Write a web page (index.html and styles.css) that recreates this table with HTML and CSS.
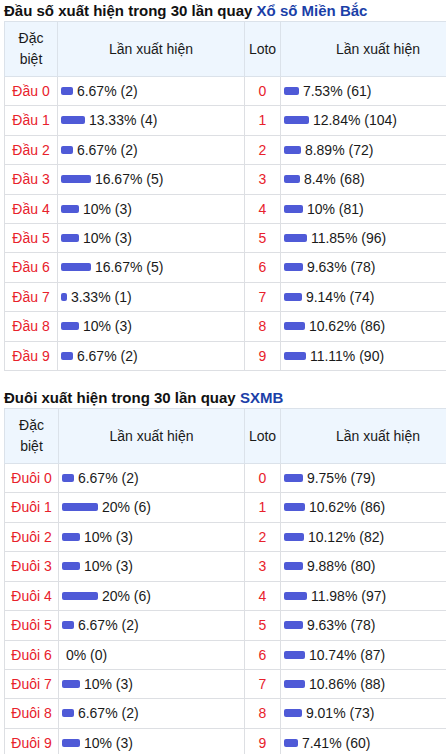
FILE: index.html
```html
<!DOCTYPE html>
<html lang="vi">
<head>
  <meta charset="UTF-8">
  <meta name="viewport" content="width=device-width, initial-scale=1.0">
  <title>Thống kê đầu đuôi</title>
  <link rel="stylesheet" href="styles.css">
</head>
<body>
  <div class="page">
    <section class="stat">
      <h2 class="stat-title">Đầu số xuất hiện trong 30 lần quay <a href="#">Xổ số Miền Bắc</a></h2>
      <table class="stat-table">
        <colgroup>
          <col class="c-head">
          <col class="c-count">
          <col class="c-loto">
          <col class="c-count2">
        </colgroup>
        <tr>
          <th>Đặc biệt</th>
          <th>Lần xuất hiện</th>
          <th>Loto</th>
          <th>Lần xuất hiện</th>
        </tr>
        <tr><td class="lbl">Đầu 0</td><td><span class="bar" style="width:12px"></span> 6.67% (2)</td><td class="lbl">0</td><td><span class="bar" style="width:15px"></span> 7.53% (61)</td></tr>
        <tr><td class="lbl">Đầu 1</td><td><span class="bar" style="width:24px"></span> 13.33% (4)</td><td class="lbl">1</td><td><span class="bar" style="width:25px"></span> 12.84% (104)</td></tr>
        <tr><td class="lbl">Đầu 2</td><td><span class="bar" style="width:12px"></span> 6.67% (2)</td><td class="lbl">2</td><td><span class="bar" style="width:17px"></span> 8.89% (72)</td></tr>
        <tr><td class="lbl">Đầu 3</td><td><span class="bar" style="width:30px"></span> 16.67% (5)</td><td class="lbl">3</td><td><span class="bar" style="width:16px"></span> 8.4% (68)</td></tr>
        <tr><td class="lbl">Đầu 4</td><td><span class="bar" style="width:18px"></span> 10% (3)</td><td class="lbl">4</td><td><span class="bar" style="width:19px"></span> 10% (81)</td></tr>
        <tr><td class="lbl">Đầu 5</td><td><span class="bar" style="width:18px"></span> 10% (3)</td><td class="lbl">5</td><td><span class="bar" style="width:23px"></span> 11.85% (96)</td></tr>
        <tr><td class="lbl">Đầu 6</td><td><span class="bar" style="width:30px"></span> 16.67% (5)</td><td class="lbl">6</td><td><span class="bar" style="width:19px"></span> 9.63% (78)</td></tr>
        <tr><td class="lbl">Đầu 7</td><td><span class="bar" style="width:6px"></span> 3.33% (1)</td><td class="lbl">7</td><td><span class="bar" style="width:18px"></span> 9.14% (74)</td></tr>
        <tr><td class="lbl">Đầu 8</td><td><span class="bar" style="width:18px"></span> 10% (3)</td><td class="lbl">8</td><td><span class="bar" style="width:21px"></span> 10.62% (86)</td></tr>
        <tr><td class="lbl">Đầu 9</td><td><span class="bar" style="width:12px"></span> 6.67% (2)</td><td class="lbl">9</td><td><span class="bar" style="width:22px"></span> 11.11% (90)</td></tr>
      </table>
    </section>

    <section class="stat">
      <h2 class="stat-title">Đuôi xuất hiện trong 30 lần quay <a href="#">SXMB</a></h2>
      <table class="stat-table stat-table--tail">
        <colgroup>
          <col class="c-head">
          <col class="c-count">
          <col class="c-loto">
          <col class="c-count2">
        </colgroup>
        <tr>
          <th>Đặc biệt</th>
          <th>Lần xuất hiện</th>
          <th>Loto</th>
          <th>Lần xuất hiện</th>
        </tr>
        <tr><td class="lbl">Đuôi 0</td><td><span class="bar" style="width:12px"></span> 6.67% (2)</td><td class="lbl">0</td><td><span class="bar" style="width:19px"></span> 9.75% (79)</td></tr>
        <tr><td class="lbl">Đuôi 1</td><td><span class="bar" style="width:36px"></span> 20% (6)</td><td class="lbl">1</td><td><span class="bar" style="width:21px"></span> 10.62% (86)</td></tr>
        <tr><td class="lbl">Đuôi 2</td><td><span class="bar" style="width:18px"></span> 10% (3)</td><td class="lbl">2</td><td><span class="bar" style="width:20px"></span> 10.12% (82)</td></tr>
        <tr><td class="lbl">Đuôi 3</td><td><span class="bar" style="width:18px"></span> 10% (3)</td><td class="lbl">3</td><td><span class="bar" style="width:19px"></span> 9.88% (80)</td></tr>
        <tr><td class="lbl">Đuôi 4</td><td><span class="bar" style="width:36px"></span> 20% (6)</td><td class="lbl">4</td><td><span class="bar" style="width:23px"></span> 11.98% (97)</td></tr>
        <tr><td class="lbl">Đuôi 5</td><td><span class="bar" style="width:12px"></span> 6.67% (2)</td><td class="lbl">5</td><td><span class="bar" style="width:19px"></span> 9.63% (78)</td></tr>
        <tr><td class="lbl">Đuôi 6</td><td><span class="bar" style="width:0px"></span> 0% (0)</td><td class="lbl">6</td><td><span class="bar" style="width:21px"></span> 10.74% (87)</td></tr>
        <tr><td class="lbl">Đuôi 7</td><td><span class="bar" style="width:18px"></span> 10% (3)</td><td class="lbl">7</td><td><span class="bar" style="width:21px"></span> 10.86% (88)</td></tr>
        <tr><td class="lbl">Đuôi 8</td><td><span class="bar" style="width:12px"></span> 6.67% (2)</td><td class="lbl">8</td><td><span class="bar" style="width:18px"></span> 9.01% (73)</td></tr>
        <tr><td class="lbl">Đuôi 9</td><td><span class="bar" style="width:18px"></span> 10% (3)</td><td class="lbl">9</td><td><span class="bar" style="width:14px"></span> 7.41% (60)</td></tr>
      </table>
    </section>
  </div>
</body>
</html>
```

FILE: styles.css
```css
html, body {
  overflow: hidden;
}
body {
  margin: 0;
  background: #fff;
  color: #1a1a1a;
  font-family: 'Liberation Sans', Arial, sans-serif;
  font-size: 14px;
}
.page {
  padding: 0 4px;
}
.stat + .stat {
  margin-top: 16px;
}
.stat-title {
  margin: 0;
  font-size: 15px;
  line-height: 21px;
  font-weight: bold;
  color: #111;
  white-space: nowrap;
}
.stat-title a {
  color: #1b3fa8;
  text-decoration: none;
}
.stat-table {
  border-collapse: collapse;
  table-layout: fixed;
  width: 471px;
}
.c-head { width: 53px; }
.c-count { width: 187px; }
.c-loto { width: 36px; }
.c-count2 { width: 195px; }
.stat-table--tail .c-head { width: 54px; }
.stat-table--tail .c-count { width: 186px; }
.stat-table th {
  background: #eef6fe;
  font-weight: normal;
  line-height: 21px;
  padding: 6px 3px;
  border: 1px solid #dbe2ea;
  text-align: center;
}
.stat-table td {
  line-height: 20.4px;
  padding: 4px 3px;
  border: 1px solid #dddfe3;
  white-space: nowrap;
}
.stat-table td.lbl {
  text-align: center;
  color: #e8212b;
}
.bar {
  display: inline-block;
  height: 8px;
  border-radius: 2px;
  background: #4f5ad7;
  vertical-align: 1px;
}
```
